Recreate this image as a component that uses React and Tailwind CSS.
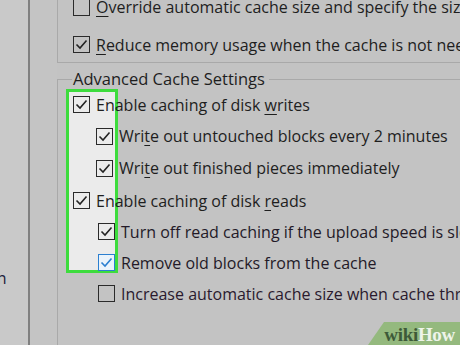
import React from 'react';

const Box = ({ checked, blue }) => (
  <span
    className={`w-[17px] h-[17px] shrink-0 border-[1.5px] flex items-center justify-center ${
      blue ? 'border-[#2b7fd0] bg-[#eaf3fb]' : 'border-[#2a2a2a]'
    }`}
  >
    {checked && (
      <svg width="13" height="11" viewBox="0 0 13 11" fill="none">
        <path
          d="M1.5 5.5 L5 9 L11.5 1.5"
          stroke={blue ? '#2b7fd0' : '#222'}
          strokeWidth="1.6"
        />
      </svg>
    )}
  </span>
);

const Row = ({ checked, blue, indent, children, h = 'h-[31px]', tone = 'text-[#1e1e1e]' }) => (
  <div className={`flex items-center gap-[6px] ${h} ${indent} ${tone} whitespace-nowrap`}>
    <Box checked={checked} blue={blue} />
    <span>{children}</span>
  </div>
);

const U = ({ children }) => <span className="underline underline-offset-[3px] decoration-1">{children}</span>;

export default function App() {
  return (
    <div
      className="relative w-[460px] h-[345px] overflow-hidden flex bg-[#c3c3c3] text-[16px]"
      style={{ fontFamily: '"Open Sans", "Noto Sans", sans-serif' }}
    >
      {/* left column */}
      <div className="w-[28px] shrink-0 bg-[#c9c9c9] flex flex-col">
        <div className="h-[268px]" />
        <div className="ml-[-13px] text-[#1c1c3c] leading-[20px]">on</div>
      </div>
      <div className="w-[2px] shrink-0 bg-[#808080]" />
      <div className="w-[27px] shrink-0 bg-[#c4c4c4]" />

      {/* settings panel */}
      <div className="flex-1 flex flex-col min-w-0">
        <div className="border-l border-b border-[#a9a9a9] pl-[15px] h-[63px] flex flex-col">
          <div className="mt-[-9px]">
            <Row indent="" h="h-[32px]">
              <U>O</U>verride automatic cache size and specify the size
            </Row>
            <Row checked indent="" h="h-[43px]">
              <U>R</U>educe memory usage when the cache is not needed
            </Row>
          </div>
        </div>

        <div className="h-[8px]" />
        <div className="flex items-center h-[16px] text-[#1e1e1e] text-[16.5px]">
          <div className="w-[15px] h-px bg-[#a9a9a9]" />
          <span className="px-[1px] whitespace-nowrap">Advanced Cache Settings</span>
          <div className="flex-1 h-px bg-[#a9a9a9] ml-[3px]" />
        </div>

        <div className="relative flex-1 border-l border-[#a9a9a9] mt-[-8px] pt-[10px] pl-[15px]">
          {/* highlight */}
          <div className="absolute left-[8px] top-[10px] w-[52px] h-[184px] border-[3px] border-[#3ddc3d] bg-[#ebebeb]" />
          <div className="relative">
            <Row checked indent="" h="h-[31.5px]">
              Enable caching of disk <U>w</U>rites
            </Row>
            <Row checked indent="pl-[23px]">
              Wri<U>t</U>e out untouched blocks every 2 minutes
            </Row>
            <Row checked indent="pl-[23px]" h="h-[33.5px]">
              Wri<U>t</U>e out finished pieces immediately
            </Row>
            <Row checked indent="">
              Enable caching of disk <U>r</U>eads
            </Row>
            <Row checked indent="pl-[25px]" tone="text-[#231a28]">
              Turn off read caching if the upload speed is slow
            </Row>
            <Row checked blue indent="pl-[25px]" tone="text-[#231a28]">
              Remove old blocks from the cache
            </Row>
            <Row indent="pl-[25px]" tone="text-[#2a1a2e]">
              Increase automatic cache size when cache thrashes
            </Row>
          </div>
        </div>
      </div>

      {/* wikiHow badge */}
      <div className="absolute right-0 bottom-0 w-[92px] h-[23px] bg-[#94b97e] [clip-path:polygon(16px_0,100%_0,100%_100%,0_100%)] flex items-end justify-end pr-[5px]">
        <span
          className="font-bold text-[19px] leading-[21px] tracking-[-0.3px]"
          style={{ fontFamily: '"Liberation Serif", serif' }}
        >
          <span className="text-[#3d5a38]">wiki</span>
          <span className="text-[#eef4ea]">How</span>
        </span>
      </div>
    </div>
  );
}
